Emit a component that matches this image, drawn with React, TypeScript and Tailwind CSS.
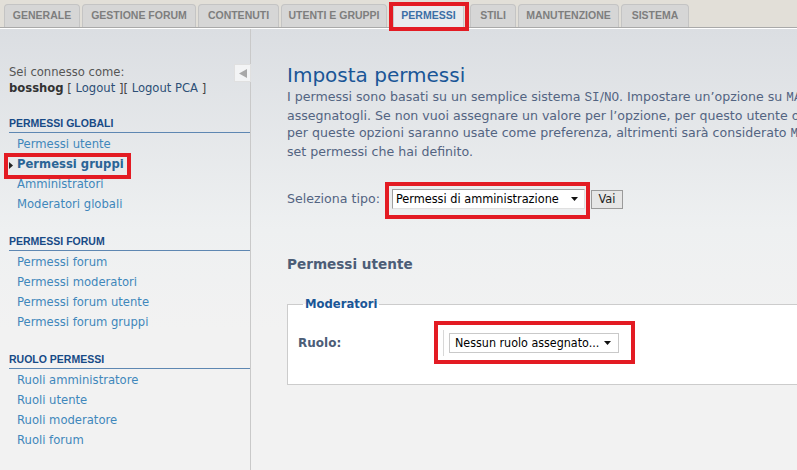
import React from 'react';

const tabs = [
  { label: 'GENERALE', w: 'w-[76px]' },
  { label: 'GESTIONE FORUM', w: 'w-[114px]' },
  { label: 'CONTENUTI', w: 'w-[81px]' },
  { label: 'UTENTI E GRUPPI', w: 'w-[106px]' },
  { label: 'PERMESSI', w: 'w-[71px]', active: true },
  { label: 'STILI', w: 'w-[46px]' },
  { label: 'MANUTENZIONE', w: 'w-[101px]' },
  { label: 'SISTEMA', w: 'w-[68px]' },
];

const menu = [
  {
    title: 'PERMESSI GLOBALI',
    items: ['Permessi utente', 'Permessi gruppi', 'Amministratori', 'Moderatori globali'],
    active: 'Permessi gruppi',
  },
  {
    title: 'PERMESSI FORUM',
    items: ['Permessi forum', 'Permessi moderatori', 'Permessi forum utente', 'Permessi forum gruppi'],
  },
  {
    title: 'RUOLO PERMESSI',
    items: ['Ruoli amministratore', 'Ruoli utente', 'Ruoli moderatore', 'Ruoli forum'],
  },
];

function RedBox({ className }: { className: string }) {
  return <div className={`absolute border-4 border-[#e31b23] pointer-events-none ${className}`} />;
}

function Caret() {
  return (
    <svg width="7" height="4" viewBox="0 0 7 4" className="shrink-0">
      <path d="M0 0h7L3.5 4z" fill="#111" />
    </svg>
  );
}

function Tabs() {
  return (
    <div className="h-[28px] bg-[#e2dfd8] flex items-end pl-[4px] gap-[2px] border-b border-[#a9a9a9] relative">
      {tabs.map((t) => (
        <div
          key={t.label}
          className={`${t.w} h-[23px] flex items-center justify-center rounded-t-[4px] border border-b-0 text-[10.5px] font-bold font-['Liberation_Sans',Arial,sans-serif] relative ${
            t.active
              ? 'bg-[#e9ebed] border-[#c8c8c8] text-[#3b6fa6] mx-[4px]'
              : 'bg-[#d6d6d6] border-[#c4c4c4] text-[#7e7e7e]'
          }`}
        >
          {t.label}
          {t.active && <RedBox className="-left-[5px] -right-[6px] -top-[3px] -bottom-[4px]" />}
        </div>
      ))}
    </div>
  );
}

function Sidebar() {
  return (
    <div className="w-[251px] shrink-0 border-r border-[#c9c9c9] relative pt-[35px] font-['DejaVu_Sans',Verdana,sans-serif]">
      <div className="absolute right-[-1px] top-[35px] w-[17px] h-[18px] bg-[#f3f4f5] border border-[#e0e0e0] flex items-center justify-center">
        <svg width="8" height="9" viewBox="0 0 8 9">
          <path d="M8 0v9L0 4.5z" fill="#a8a8a8" />
        </svg>
      </div>
      <div className="pl-[9px] text-[11.6px] leading-[16px] text-[#555] whitespace-nowrap">
        <div>Sei connesso come:</div>
        <div>
          <span className="font-bold text-[#333]">bosshog</span>{' '}
          <span className="text-[#444]">[ </span>
          <span className="text-[#2d4f76]">Logout</span>
          <span className="text-[#444]"> ][ </span>
          <span className="text-[#2d4f76]">Logout PCA</span>
          <span className="text-[#444]"> ]</span>
        </div>
      </div>
      <div className="mt-[21px] flex flex-col gap-[20px]">
        {menu.map((g) => (
          <div key={g.title}>
            <div className="ml-[9px] border-b border-[#5e87b2] pb-[2px] text-[10.5px] leading-[13px] font-bold text-[#174a86] font-['Liberation_Sans',Arial,sans-serif]">
              {g.title}
            </div>
            <ul className="pt-[2px]">
              {g.items.map((it) => {
                const active = it === g.active;
                return (
                  <li key={it} className="h-[20px] flex items-center text-[11.6px] relative pl-[17px] whitespace-nowrap">
                    {active && (
                      <>
                        <svg width="4" height="7" viewBox="0 0 4 7" className="absolute left-[9px] top-[7px]">
                          <path d="M0 0l4 3.5L0 7z" fill="#222" />
                        </svg>
                        <RedBox className="left-[4px] w-[127px] top-[-2px] h-[26px]" />
                      </>
                    )}
                    <span className={active ? 'font-bold text-[#2a6496]' : 'text-[#3f87bb]'}>{it}</span>
                  </li>
                );
              })}
            </ul>
          </div>
        ))}
      </div>
    </div>
  );
}

const mono = "font-['Liberation_Mono',monospace]";

function Main() {
  return (
    <div className="flex-1 min-w-0 overflow-hidden pl-[36px] pt-[33px] font-['DejaVu_Sans',Verdana,sans-serif]">
      <h1 className="text-[20px] leading-[26px] text-[#1a5697] whitespace-nowrap">Imposta permessi</h1>
      <div className="text-[12.6px] leading-[17px] text-[#536482] whitespace-nowrap">
        <div>
          I permessi sono basati su un semplice sistema <span className={mono}>SI</span>/<span className={mono}>NO</span>.
          Impostare un’opzione su <span className={mono}>MAI</span> per un utente
        </div>
        <div>assegnatogli. Se non vuoi assegnare un valore per l’opzione, per questo utente o gruppo</div>
        <div>
          per queste opzioni saranno usate come preferenza, altrimenti sarà considerato <span className={mono}>MAI</span>.
        </div>
        <div>set permessi che hai definito.</div>
      </div>

      <div className="mt-[29px] flex items-center text-[12.6px] text-[#536482]">
        <span className="mr-[12px]">Seleziona tipo:</span>
        <div className="relative">
          <div className="w-[193px] h-[20px] bg-white border border-t-[#a0a0a0] border-l-[#a0a0a0] border-r-[#e0e0e0] border-b-[#e0e0e0] flex items-center justify-between pl-[3px] pr-[6px] text-black text-[12.6px] font-['DejaVu_Sans_Condensed',sans-serif] whitespace-nowrap">
            <span>Permessi di amministrazione</span>
            <Caret />
          </div>
          <RedBox className="-left-[7px] -right-[5px] -top-[7px] -bottom-[10px]" />
        </div>
        <div className="ml-[6px] h-[19px] w-[32px] bg-[#e6e6e6] border border-[#9a9a9a] flex items-center justify-center text-[12.6px] text-[#222] font-['DejaVu_Sans_Condensed',sans-serif]">
          Vai
        </div>
      </div>

      <h2 className="mt-[46px] text-[13.6px] leading-[18px] font-bold text-[#4c5d77]">Permessi utente</h2>

      <fieldset className="mt-[23px] bg-white border border-[#cccccc] w-[600px] h-[89px] pl-[10px] pt-0">
        <legend className="ml-[5px] px-[2px] text-[11.6px] font-bold text-[#1a5697]">Moderatori</legend>
        <div className="flex items-center mt-[17px]">
          <span className="w-[145px] text-[12px] font-bold text-[#4c5d77]">Ruolo:</span>
          <div className="relative flex items-center">
            <div className="w-[1px] h-[26px] bg-[#d8d8d8] mr-[5px]" />
            <div className="w-[170px] h-[20px] bg-white border border-[#c9c9c9] flex items-center justify-between pl-[5px] pr-[7px] text-[12.4px] text-black font-['DejaVu_Sans_Condensed',sans-serif] whitespace-nowrap">
              <span>Nessun ruolo assegnato...</span>
              <Caret />
            </div>
            <RedBox className="-left-[9px] -right-[16px] -top-[9px] -bottom-[8px]" />
          </div>
        </div>
      </fieldset>
    </div>
  );
}

export default function App() {
  return (
    <div className="w-[797px] h-[470px] overflow-hidden bg-[#f2f2f2] flex flex-col">
      <Tabs />
      <div className="flex-1 flex border-t border-white bg-[linear-gradient(to_bottom,#dbdee2_0px,#eef0f1_200px,#f2f2f2_300px)]">
        <Sidebar />
        <Main />
      </div>
    </div>
  );
}
